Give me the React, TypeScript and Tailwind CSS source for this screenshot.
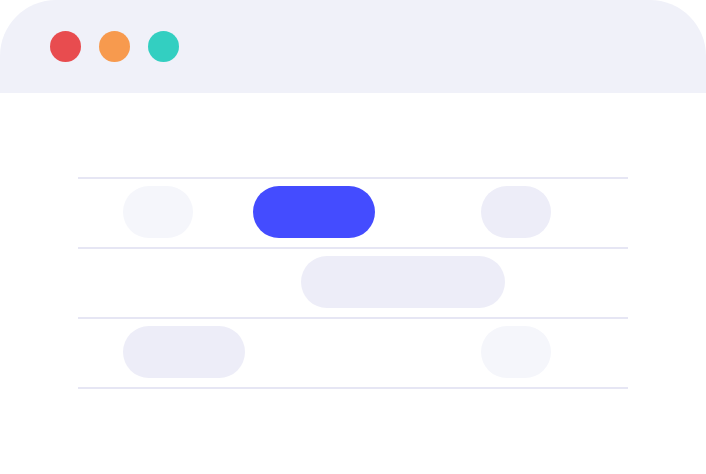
export default function App() {
  const pill = 'h-[52px] rounded-full shrink-0';

  return (
    <div className="w-[706px] h-[474px] bg-white overflow-hidden">
      {/* window bar */}
      <div className="h-[93px] bg-[#f0f1f9] rounded-t-[56px] flex items-center gap-[18px] pl-[50px] pb-[1px]">
        <span className="w-[31px] h-[31px] rounded-full bg-[#e84c4f]" />
        <span className="w-[31px] h-[31px] rounded-full bg-[#f79a4e]" />
        <span className="w-[31px] h-[31px] rounded-full bg-[#33cfc1]" />
      </div>

      {/* timeline rows */}
      <div className="mt-[84px] ml-[78px] w-[550px]">
        <div className="border-t-2 border-[#e6e6f4] pt-[7px] pb-[9px] flex">
          <div className={`${pill} ml-[45px] w-[70px] bg-[#f5f6fb]`} />
          <div className={`${pill} ml-[60px] w-[122px] bg-[#444cff]`} />
          <div className={`${pill} ml-[106px] w-[70px] bg-[#ededf8]`} />
        </div>
        <div className="border-t-2 border-[#e6e6f4] pt-[7px] pb-[9px] flex">
          <div className={`${pill} ml-[223px] w-[204px] bg-[#ededf8]`} />
        </div>
        <div className="border-t-2 border-[#e6e6f4] pt-[7px] pb-[9px] flex">
          <div className={`${pill} ml-[45px] w-[122px] bg-[#ededf8]`} />
          <div className={`${pill} ml-[236px] w-[70px] bg-[#f5f6fb]`} />
        </div>
        <div className="border-t-2 border-[#e6e6f4]" />
      </div>
    </div>
  );
}
